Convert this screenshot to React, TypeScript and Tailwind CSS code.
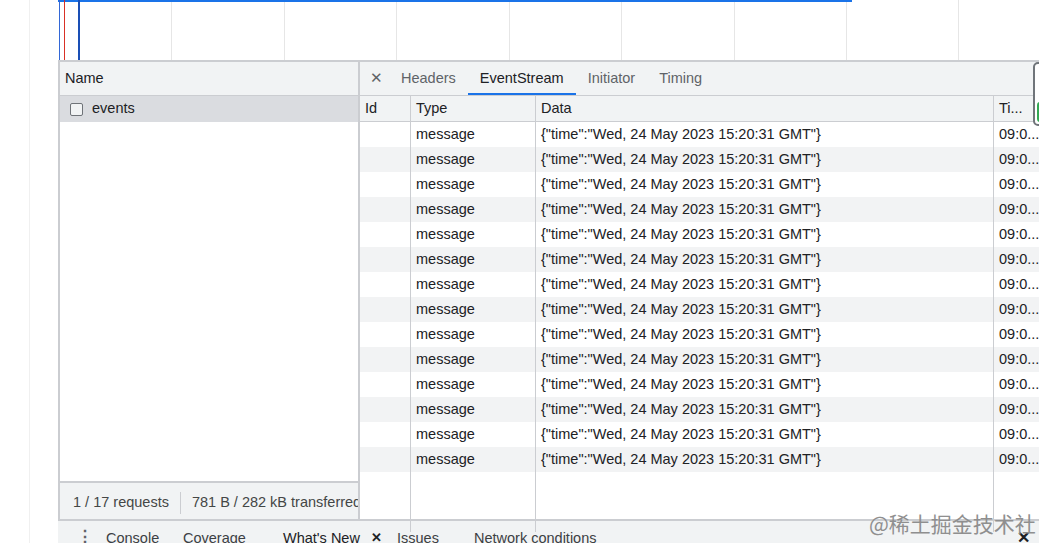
import React from 'react';

const rows = Array.from({ length: 14 }, () => ({
  type: 'message',
  data: '{"time":"Wed, 24 May 2023 15:20:31 GMT"}',
  time: '09:0...',
}));

const gridLines = [171, 284, 396, 509, 621, 734, 846, 958];

function Overview() {
  return (
    <div className="relative h-[60px] shrink-0">
      {gridLines.map((x) => (
        <div key={x} className="absolute top-0 h-full w-px bg-[#e6e6e6]" style={{ left: x }} />
      ))}
      <div className="absolute left-[58px] top-0 h-[2px] w-[794px] bg-[#1a73e8]" />
      <div className="absolute left-[59px] top-0 h-full w-px bg-[#3367d6]" />
      <div className="absolute left-[64px] top-0 h-full w-px bg-[#d93025]" />
      <div className="absolute left-[78px] top-0 h-full w-[2px] bg-[#1a4fb5]" />
    </div>
  );
}

function NamePanel() {
  return (
    <div className="flex w-[302px] shrink-0 flex-col border-x-2 border-[#cbcdd1]">
      <div className="flex h-[34px] items-center border-b border-[#cbcdd1] bg-[#f1f3f4] px-[5px]">
        Name
      </div>
      <div className="flex h-[26px] items-center bg-[#dadce0] pl-[10px]">
        <span className="mr-[9px] h-[13px] w-[13px] rounded-[2px] border border-[#6f7378] bg-[#f1f3f4]" />
        events
      </div>
      <div className="flex-1 bg-white" />
      <div className="flex h-[38px] items-center overflow-hidden whitespace-nowrap border-t-2 border-[#cbcdd1] bg-[#f1f3f4] pl-[13px] pt-[4px] text-[#444746]">
        <span>1 / 17 requests</span>
        <span className="mx-[11px] h-[22px] w-px shrink-0 bg-[#cbcdd1]" />
        <span>781 B / 282 kB transferred</span>
      </div>
    </div>
  );
}

function DetailPanel() {
  const tabs = ['Headers', 'EventStream', 'Initiator', 'Timing'];
  return (
    <div className="relative flex min-w-0 flex-1 flex-col">
      <div className="flex h-[34px] shrink-0 items-stretch border-b border-[#cbcdd1] bg-[#f1f3f4]">
        <div className="flex w-[29px] items-center justify-center pl-[3px] text-[15px] text-[#5f6368]">✕</div>
        {tabs.map((t) => (
          <div
            key={t}
            className={`flex items-center px-3 ${
              t === 'EventStream' ? 'border-b-2 border-[#1a73e8] pt-[2px] text-[#202124]' : 'text-[#5f6368]'
            }`}
          >
            {t}
          </div>
        ))}
      </div>
      <div className="grid flex-1 grid-cols-[50px_125px_458px_1fr] grid-rows-[26px] auto-rows-[25px] content-start">
        {['Id', 'Type', 'Data', 'Ti...'].map((h, i) => (
          <div
            key={h}
            className={`flex items-center border-b border-[#cbcdd1] bg-[#f1f3f4] pl-[5px] ${i === 0 ? '' : 'border-l'}`}
          >
            {h}
          </div>
        ))}
        {rows.map((r, i) => {
          const bg = i % 2 === 1 ? 'bg-[#f2f3f4]' : 'bg-white';
          return (
            <React.Fragment key={i}>
              <div className={bg} />
              <div className={`${bg} flex items-center border-l border-[#cbcdd1] pl-[5px]`}>{r.type}</div>
              <div className={`${bg} flex items-center whitespace-nowrap border-l border-[#cbcdd1] pl-[5px]`}>{r.data}</div>
              <div className={`${bg} flex items-center overflow-hidden whitespace-nowrap border-l border-[#cbcdd1] pl-[5px]`}>
                {r.time}
              </div>
            </React.Fragment>
          );
        })}
        <div className="h-[60px]" />
        <div className="h-[60px] border-l border-[#cbcdd1]" />
        <div className="h-[60px] border-l border-[#cbcdd1]" />
        <div className="h-[60px] border-l border-[#cbcdd1]" />
      </div>
      <div className="absolute left-[673px] top-0 h-[64px] w-[20px] rounded-[5px] border-2 border-[#70757a] bg-white">
        <div className="absolute bottom-[2px] left-[2px] h-[20px] w-[6px] rounded-sm bg-[#34a853]" />
      </div>
    </div>
  );
}

function Drawer() {
  return (
    <div className="flex h-[24px] shrink-0 items-start whitespace-nowrap border-t-2 border-[#cbcdd1] bg-[#f1f3f4] pt-[7px] text-[#3c4043]">
      <span className="ml-[19px] w-[29px] text-[16px] font-bold leading-[17px] text-[#5f6368]">⋮</span>
      <span className="w-[77px]">Console</span>
      <span className="w-[100px]">Coverage</span>
      <span className="w-[88px] text-[#202124]">What's New</span>
      <span className="w-[26px] text-[13px] font-bold leading-[19px] text-[#202124]">✕</span>
      <span className="w-[77px]">Issues</span>
      <span>Network conditions</span>
      <span className="ml-auto mr-[9px] text-[16px] font-bold leading-[19px] text-[#202124]">✕</span>
    </div>
  );
}

export default function App() {
  return (
    <div
      className="relative flex h-[543px] w-[1039px] flex-col overflow-hidden bg-white text-[14.5px] text-[#202124]"
      style={{ fontFamily: '"Liberation Sans", Arial, sans-serif' }}
    >
      <div className="absolute left-[29px] top-0 h-full w-px bg-[#f0f0f0]" />
      <Overview />
      <div className="ml-[58px] flex min-h-0 flex-1 flex-col border-t-2 border-[#cbcdd1]">
        <div className="flex min-h-0 flex-1">
          <NamePanel />
          <DetailPanel />
        </div>
        <Drawer />
      </div>
      <div
        className="pointer-events-none absolute left-[869px] top-[508px] text-[21px] text-[#8f8f8f]"
        style={{ fontFamily: '"Noto Sans CJK SC", "Liberation Serif", serif' }}
      >
        @稀土掘金技术社区
      </div>
    </div>
  );
}
